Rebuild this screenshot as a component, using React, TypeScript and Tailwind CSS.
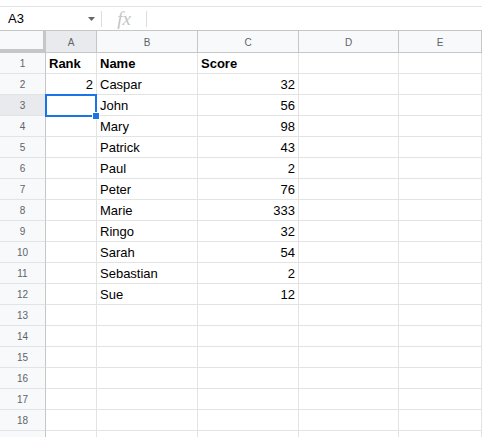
import React from "react";

const rows: [string, string, string][] = [
  ["Rank", "Name", "Score"],
  ["2", "Caspar", "32"],
  ["", "John", "56"],
  ["", "Mary", "98"],
  ["", "Patrick", "43"],
  ["", "Paul", "2"],
  ["", "Peter", "76"],
  ["", "Marie", "333"],
  ["", "Ringo", "32"],
  ["", "Sarah", "54"],
  ["", "Sebastian", "2"],
  ["", "Sue", "12"],
];

const cols = ["A", "B", "C", "D", "E"];

export default function App() {
  const allRows = Array.from({ length: 19 }, (_, i) => rows[i] ?? ["", "", ""]);
  return (
    <div
      className="w-[482px] h-[437px] overflow-hidden bg-white text-black"
      style={{ fontFamily: '"Liberation Sans", Arial, sans-serif' }}
    >
      <div className="h-[6px]" />
      <div className="h-[24px] border-t border-[#e3e3e3] flex items-center">
        <div className="w-[101px] h-full flex items-center justify-between pl-[8px] pr-[6px]">
          <span className="text-[13px] leading-none">A3</span>
          <svg width="7" height="4" viewBox="0 0 7 4">
            <path d="M0 0 L7 0 L3.5 4 Z" fill="#666" />
          </svg>
        </div>
        <div className="w-px h-[16px] bg-[#dadce0]" />
        <div className="w-[44px] flex items-center justify-center">
          <span
            className="text-[19px] leading-none italic text-[#c4c4c4]"
            style={{ fontFamily: '"Liberation Serif", "Times New Roman", serif' }}
          >
            fx
          </span>
        </div>
        <div className="w-px h-[16px] bg-[#dadce0]" />
      </div>
      <div className="grid grid-cols-[46px_51px_101px_101px_100px_1fr] border-t border-[#c4c7c5]">
        <div className="h-[22px] bg-[#f8f9fa] border-r-[3px] border-b-[4px] border-[#c4c7c5]" />
        {cols.map((c) => (
          <div
            key={c}
            className={`h-[22px] flex items-center justify-center pt-px text-[10px] text-[#5f6368] border-b border-r border-[#c4c7c5] ${
              c === "A" ? "bg-[#e8eaed]" : "bg-[#f8f9fa]"
            }`}
          >
            {c}
          </div>
        ))}
        {allRows.map((r, i) => {
          const n = i + 1;
          const bold = n === 1;
          return (
            <React.Fragment key={n}>
              <div
                className={`h-[21px] flex items-center justify-center pt-px text-[10px] text-[#5f6368] border-r border-r-[#c4c7c5] border-b border-b-[#e2e3e3] ${
                  n === 3 ? "bg-[#e8eaed]" : "bg-[#f8f9fa]"
                }`}
              >
                {n}
              </div>
              <div
                className={`relative h-[21px] flex items-center pt-[2px] text-[13px] px-[3px] border-r border-b border-[#e2e3e3] ${
                  bold ? "font-bold justify-start" : "justify-end"
                } ${n === 3 ? "z-10" : ""}`}
              >
                {r[0]}
                {n === 3 && (
                  <div className="absolute -left-px -top-px w-[52px] h-[23px] border-2 border-[#1a73e8] z-10">
                    <div className="absolute -right-[5px] -bottom-[5px] w-[8px] h-[8px] bg-[#1a73e8] border border-white" />
                  </div>
                )}
              </div>
              <div
                className={`h-[21px] flex items-center pt-[2px] text-[13px] px-[3px] border-r border-b border-[#e2e3e3] ${
                  bold ? "font-bold" : ""
                }`}
              >
                {r[1]}
              </div>
              <div
                className={`h-[21px] flex items-center pt-[2px] text-[13px] px-[3px] border-r border-b border-[#e2e3e3] ${
                  bold ? "font-bold justify-start" : "justify-end"
                }`}
              >
                {r[2]}
              </div>
              <div className="h-[21px] border-r border-b border-[#e2e3e3]" />
              <div className="h-[21px] border-r border-b border-[#e2e3e3]" />
            </React.Fragment>
          );
        })}
      </div>
    </div>
  );
}
